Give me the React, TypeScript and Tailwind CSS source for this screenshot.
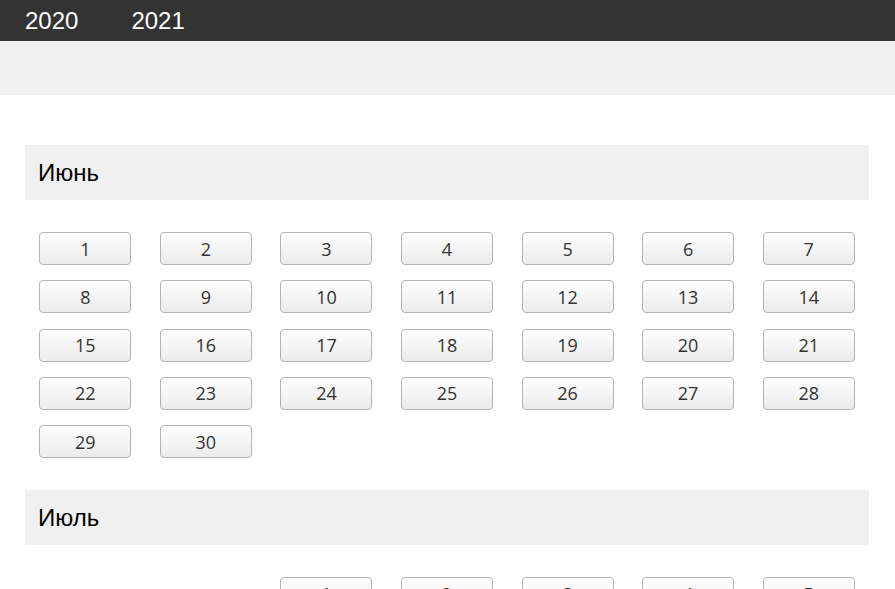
import React from "react";

function Month({ name, start, days }: { name: string; start: number; days: number }) {
  const cells: (number | null)[] = [];
  for (let i = 0; i < start; i++) cells.push(null);
  for (let d = 1; d <= days; d++) cells.push(d);
  return (
    <div>
      <div className="h-[55px] bg-[#f0f0f0] flex items-center pl-[13px] text-[24px] text-black" style={{ fontFamily: '"Liberation Sans", Arial, sans-serif' }}>
        {name}
      </div>
      <div className="grid grid-cols-7 gap-y-[15.25px] pt-[32px] pb-[32px]">
        {cells.map((c, i) => (
          <div key={i} className="flex justify-center">
            {c !== null ? (
              <button className="w-[92px] h-[33px] rounded-[4px] border border-[#b4b4b4] bg-gradient-to-b from-white to-[#ebebeb] text-[18px] text-[#333] leading-none flex items-center justify-center" style={{ fontFamily: '"Open Sans", sans-serif' }}>
                {c}
              </button>
            ) : (
              <div className="w-[92px] h-[33px]" />
            )}
          </div>
        ))}
      </div>
    </div>
  );
}

export default function App() {
  return (
    <div className="w-[895px] h-[589px] overflow-hidden bg-white">
      <div className="h-[41px] bg-[#333333] flex items-center pl-[25px] gap-[53px] text-white text-[24px]" style={{ fontFamily: '"Liberation Sans", Arial, sans-serif' }}>
        <span>2020</span>
        <span>2021</span>
      </div>
      <div className="h-[54px] bg-[#f0f0f0]" />
      <div className="pl-[25px] pr-[26px] pt-[50px]">
        <Month name="Июнь" start={0} days={30} />
        <Month name="Июль" start={2} days={31} />
      </div>
    </div>
  );
}
